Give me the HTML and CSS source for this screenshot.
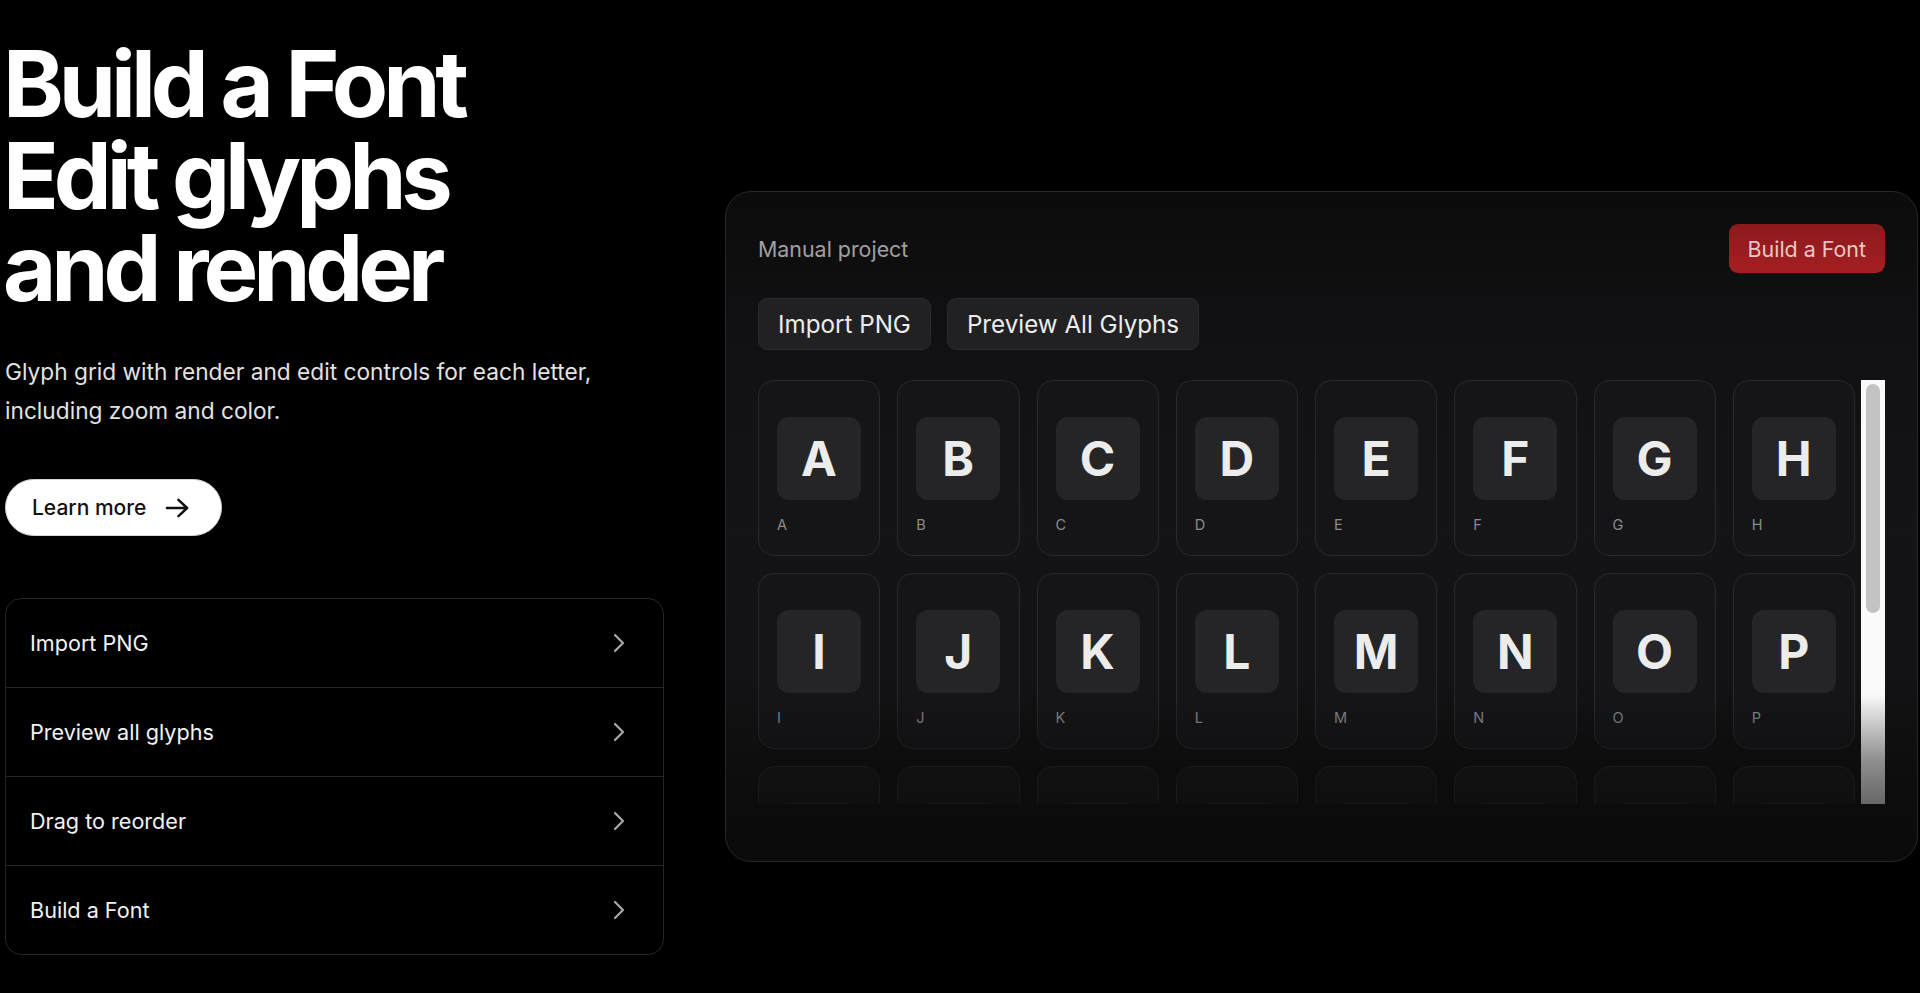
FILE: index.html
```html
<!DOCTYPE html>
<html lang="en">
<head>
<meta charset="utf-8">
<title>Build a Font</title>
<link rel="stylesheet" href="styles.css">
</head>
<body>
<main class="page">
  <section class="intro">
    <h1 class="title">Build a Font<br>Edit glyphs<br>and render</h1>
    <p class="lead">Glyph grid with render and edit controls for each letter, including zoom and color.</p>
    <a class="learn" href="#">Learn more
      <svg class="learn-arrow" viewBox="0 0 26 22" aria-hidden="true"><path d="M2 11h21M14 2.5l9 8.5-9 8.5"/></svg>
    </a>
    <ul class="features">
      <li class="feature"><span>Import PNG</span><svg class="chev" viewBox="0 0 12 20"><path d="M2 2l8 8-8 8"/></svg></li>
      <li class="feature"><span>Preview all glyphs</span><svg class="chev" viewBox="0 0 12 20"><path d="M2 2l8 8-8 8"/></svg></li>
      <li class="feature"><span>Drag to reorder</span><svg class="chev" viewBox="0 0 12 20"><path d="M2 2l8 8-8 8"/></svg></li>
      <li class="feature"><span>Build a Font</span><svg class="chev" viewBox="0 0 12 20"><path d="M2 2l8 8-8 8"/></svg></li>
    </ul>
  </section>

  <section class="panel">
    <header class="panel-head">
      <span class="project">Manual project</span>
      <button class="build">Build a Font</button>
    </header>
    <div class="actions">
      <button class="action">Import PNG</button>
      <button class="action">Preview All Glyphs</button>
    </div>
    <div class="grid-wrap">
      <div class="grid">
        <div class="card"><div class="tile">A</div><div class="label">A</div></div>
        <div class="card"><div class="tile">B</div><div class="label">B</div></div>
        <div class="card"><div class="tile">C</div><div class="label">C</div></div>
        <div class="card"><div class="tile">D</div><div class="label">D</div></div>
        <div class="card"><div class="tile">E</div><div class="label">E</div></div>
        <div class="card"><div class="tile">F</div><div class="label">F</div></div>
        <div class="card"><div class="tile">G</div><div class="label">G</div></div>
        <div class="card"><div class="tile">H</div><div class="label">H</div></div>
        <div class="card"><div class="tile">I</div><div class="label">I</div></div>
        <div class="card"><div class="tile">J</div><div class="label">J</div></div>
        <div class="card"><div class="tile">K</div><div class="label">K</div></div>
        <div class="card"><div class="tile">L</div><div class="label">L</div></div>
        <div class="card"><div class="tile">M</div><div class="label">M</div></div>
        <div class="card"><div class="tile">N</div><div class="label">N</div></div>
        <div class="card"><div class="tile">O</div><div class="label">O</div></div>
        <div class="card"><div class="tile">P</div><div class="label">P</div></div>
        <div class="card"><div class="tile">Q</div><div class="label">Q</div></div>
        <div class="card"><div class="tile">R</div><div class="label">R</div></div>
        <div class="card"><div class="tile">S</div><div class="label">S</div></div>
        <div class="card"><div class="tile">T</div><div class="label">T</div></div>
        <div class="card"><div class="tile">U</div><div class="label">U</div></div>
        <div class="card"><div class="tile">V</div><div class="label">V</div></div>
        <div class="card"><div class="tile">W</div><div class="label">W</div></div>
        <div class="card"><div class="tile">X</div><div class="label">X</div></div>
        <div class="card"><div class="tile">Y</div><div class="label">Y</div></div>
        <div class="card"><div class="tile">Z</div><div class="label">Z</div></div>
      </div>
      <div class="scrollbar"><div class="thumb"></div></div>
      <div class="fade"></div>
    </div>
  </section>
</main>
</body>
</html>
```

FILE: styles.css
```css
* { box-sizing: border-box; }

html, body {
  margin: 0;
  height: 100%;
  background: #000;
  color: #fff;
  font-family: Inter, "Noto Sans", "Liberation Sans", sans-serif;
  overflow: hidden;
}

.page {
  display: grid;
  grid-template-columns: 659px 1193px;
  column-gap: 61px;
  align-items: start;
  padding: 0 2px 0 5px;
}

/* ---------- left column ---------- */
.intro {
  display: flex;
  flex-direction: column;
  align-items: flex-start;
  padding-top: 38px;
}

.title {
  margin: 0 0 0 -2px;
  font-size: 92px;
  line-height: 92px;
  font-weight: 700;
  letter-spacing: -0.055em;
  color: #fff;
}

.lead {
  margin: 38px 0 0;
  max-width: 620px;
  font-size: 22.7px;
  line-height: 39px;
  color: #e2e2e2;
}

.learn {
  margin-top: 49px;
  display: inline-flex;
  align-items: center;
  gap: 19px;
  height: 57px;
  padding: 0 31px 0 26px;
  border-radius: 29px;
  background: #fff;
  border: 1px solid #d6d6d6;
  color: #111;
  text-decoration: none;
  font-size: 21px;
  font-weight: 500;
}

.learn-arrow {
  width: 25px;
  height: 22px;
  fill: none;
  stroke: #111;
  stroke-width: 2.6;
  stroke-linecap: round;
  stroke-linejoin: round;
}

.features {
  list-style: none;
  margin: 62px 0 0;
  padding: 0;
  width: 100%;
  border: 1px solid #262626;
  border-radius: 16px;
  overflow: hidden;
}

.feature {
  display: flex;
  align-items: center;
  justify-content: space-between;
  height: 89px;
  padding: 0 38px 0 24px;
  font-size: 21.6px;
  color: #f2f2f2;
  border-top: 1px solid #262626;
}

.feature:first-child {
  border-top: 0;
  height: 88px;
}

.chev {
  width: 12px;
  height: 20px;
  fill: none;
  stroke: #a9a9a9;
  stroke-width: 2.2;
  stroke-linecap: round;
  stroke-linejoin: round;
}

/* ---------- right panel ---------- */
.panel {
  margin-top: 191px;
  height: 671px;
  border: 1px solid #272729;
  border-radius: 26px;
  padding: 32px 32px 57px 32px;
  background: linear-gradient(180deg, #0b0b0c 0%, #111113 20%, #141416 50%, #131315 72%, #0d0d0e 88%, #0a0a0a 100%);
  display: flex;
  flex-direction: column;
}

.panel-head {
  display: flex;
  align-items: center;
  justify-content: space-between;
  height: 49px;
}

.project {
  font-size: 21.4px;
  color: #a0a0a2;
}

.build {
  height: 49px;
  padding: 0 19px;
  border: 0;
  border-radius: 9px;
  background: linear-gradient(180deg, #8c191c 0%, #a51f23 100%);
  color: #e8c6c6;
  font-family: inherit;
  font-size: 21.4px;
}

.actions {
  display: flex;
  gap: 16px;
  margin-top: 25px;
}

.action {
  height: 52px;
  padding: 0 19px;
  border: 1px solid #2a2a2c;
  border-radius: 9px;
  background: #212123;
  color: #ececec;
  font-family: inherit;
  font-size: 24.2px;
}

.grid-wrap {
  position: relative;
  display: flex;
  margin-top: 30px;
  height: 424px;
}

.grid {
  flex: 1;
  height: 100%;
  overflow: hidden;
  display: grid;
  grid-template-columns: repeat(8, 1fr);
  grid-auto-rows: 176px;
  gap: 17px;
  padding-right: 6px;
}

.scrollbar {
  width: 24px;
  height: 100%;
  padding: 4px 5px;
  background: #fafafa;
}

.thumb {
  height: 229px;
  border-radius: 7px;
  background: #c3c3c3;
}

.card {
  display: flex;
  flex-direction: column;
  align-items: flex-start;
  padding: 36px 18px 0;
  border: 1px solid #29292b;
  border-radius: 16px;
  background: #151517;
}

.tile {
  width: 84px;
  height: 83px;
  border-radius: 12px;
  background: #252527;
  display: flex;
  align-items: center;
  justify-content: center;
  font-size: 48px;
  font-weight: 700;
  color: #ececec;
}

.label {
  margin-top: 15px;
  font-size: 14.5px;
  line-height: 20px;
  color: #8b8b8d;
}

.fade {
  position: absolute;
  left: 0;
  right: 0;
  bottom: 0;
  height: 110px;
  pointer-events: none;
  background: linear-gradient(180deg, rgba(12, 12, 13, 0) 0%, rgba(12, 12, 13, 0.45) 60%, rgba(12, 12, 13, 0.62) 100%);
}
```
